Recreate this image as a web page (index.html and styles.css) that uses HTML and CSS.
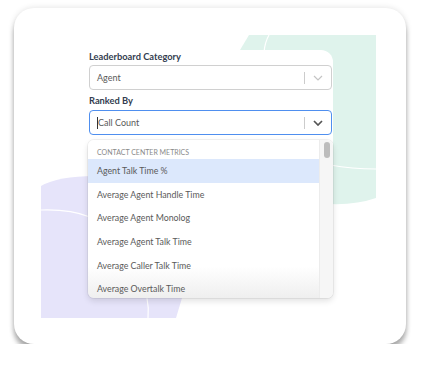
FILE: index.html
```html
<!DOCTYPE html>
<html lang="en">
<head>
  <meta charset="UTF-8" />
  <title>Leaderboard settings</title>
  <link rel="stylesheet" href="styles.css">
</head>
<body>
  <div class="card">
    <!-- decorative background art -->
    <svg class="art" width="392" height="336" viewBox="14 8 392 336">
      <path d="M249 35 L376 35 L376 198 Q356 205 330 204 L238 200 L234 60 Z" fill="#dff3ec" />
      <path d="M269 35 Q265 42 264 52" stroke="#fff" stroke-width="1.2" fill="none" />
      <path d="M330 165 Q352 169 376 169" stroke="#fff" stroke-width="1.2" fill="none" />
      <path d="M41 318 L41 186 Q58 176 95 176 L186 180 L182 298 L176 318 Z" fill="#e6e4fa" />
      <path d="M41 210 Q70 209 90 217" stroke="#fff" stroke-width="1.2" fill="none" />
      <path d="M147 298 Q149 308 148 318" stroke="#fff" stroke-width="1.2" fill="none" />
    </svg>

    <div class="panel">
      <label class="field-label">Leaderboard Category</label>
      <div class="select">
        <span class="select-value">Agent</span>
        <span class="select-sep"></span>
        <svg class="chevron" width="10" height="6" viewBox="0 0 10 6"><path d="M1 1 L5 5 L9 1" stroke="#c4c4c4" stroke-width="1.2" fill="none" /></svg>
      </div>

      <label class="field-label">Ranked By</label>
      <div class="select select-focus">
        <span class="caret"></span>
        <span class="select-value">Call Count</span>
        <span class="select-sep"></span>
        <svg class="chevron" width="10" height="6" viewBox="0 0 10 6"><path d="M1 1 L5 5 L9 1" stroke="#555" stroke-width="1.7" fill="none" /></svg>
      </div>

      <div class="menu">
        <div class="menu-list">
          <div class="menu-group">Contact Center Metrics</div>
          <div class="menu-item active">Agent Talk Time %</div>
          <div class="menu-item">Average Agent Handle Time</div>
          <div class="menu-item">Average Agent Monolog</div>
          <div class="menu-item">Average Agent Talk Time</div>
          <div class="menu-item">Average Caller Talk Time</div>
          <div class="menu-item">Average Overtalk Time</div>
        </div>
        <div class="scroll">
          <div class="scroll-thumb"></div>
        </div>
      </div>
    </div>
  </div>
</body>
</html>
```

FILE: styles.css
```css
body {
  margin: 0;
  background: #fff;
  font-family: Lato, "Open Sans", sans-serif;
}

.card {
  position: relative;
  margin: 8px 0 0 14px;
  width: 392px;
  height: 336px;
  background: #fff;
  border-radius: 20px;
  box-shadow: 0 6px 5px rgba(0,0,0,0.3), 0 0 6px rgba(0,0,0,0.12);
  overflow: hidden;
}

.art {
  position: absolute;
  left: 0;
  top: 0;
}

.panel {
  position: relative;
  margin: 42px 0 0 74px;
  width: 245px;
  height: 225px;
  background: #fff;
  border-radius: 0 12px 0 0;
  box-sizing: border-box;
  padding: 1px 1px 0 1px;
}

.field-label {
  display: block;
  font-size: 9.3px;
  font-weight: bold;
  color: #333d4f;
  line-height: 12px;
}

.select {
  display: flex;
  align-items: center;
  height: 25px;
  margin: 2px 0 5px;
  border: 1px solid #d0d0d0;
  border-radius: 4px;
  box-sizing: border-box;
  padding: 0 0 0 7px;
}

.select-focus {
  border: 1.5px solid #4f8fef;
  margin-top: 3px;
}

.select-value {
  flex: 1;
  font-size: 9px;
  color: #5a5a5a;
}

.caret {
  width: 1px;
  height: 12px;
  background: #333;
}

.select-sep {
  width: 1px;
  height: 12px;
  background: #ccc;
}

.chevron {
  margin: 0 8px 0 8px;
}

.menu {
  position: relative;
  margin: 5px 0 0 -1px;
  width: 245px;
  height: 158px;
  background: linear-gradient(#fff 80%, #efefef);
  border-radius: 6px;
  box-shadow: 0 0 0 1px rgba(0,0,0,0.05), 0 3px 6px rgba(0,0,0,0.12);
  display: flex;
  overflow: hidden;
}

.menu-list {
  flex: 1;
  padding-top: 5px;
}

.menu-group {
  font-size: 7px;
  text-transform: uppercase;
  color: #8a8a8a;
  padding: 0 9px;
  height: 14px;
  line-height: 14px;
}

.menu-item {
  font-size: 8.8px;
  color: #5a5a5a;
  padding: 0 9px;
  height: 23.7px;
  line-height: 23.7px;
}

.menu-item.active {
  background: #dce8fc;
}

.scroll {
  width: 13px;
  background: #f6f6f6;
  border-left: 1px solid #ececec;
  padding-top: 2px;
}

.scroll-thumb {
  width: 6px;
  height: 16px;
  margin: 0 auto;
  background: #bdbdbd;
  border-radius: 3px;
}
```
